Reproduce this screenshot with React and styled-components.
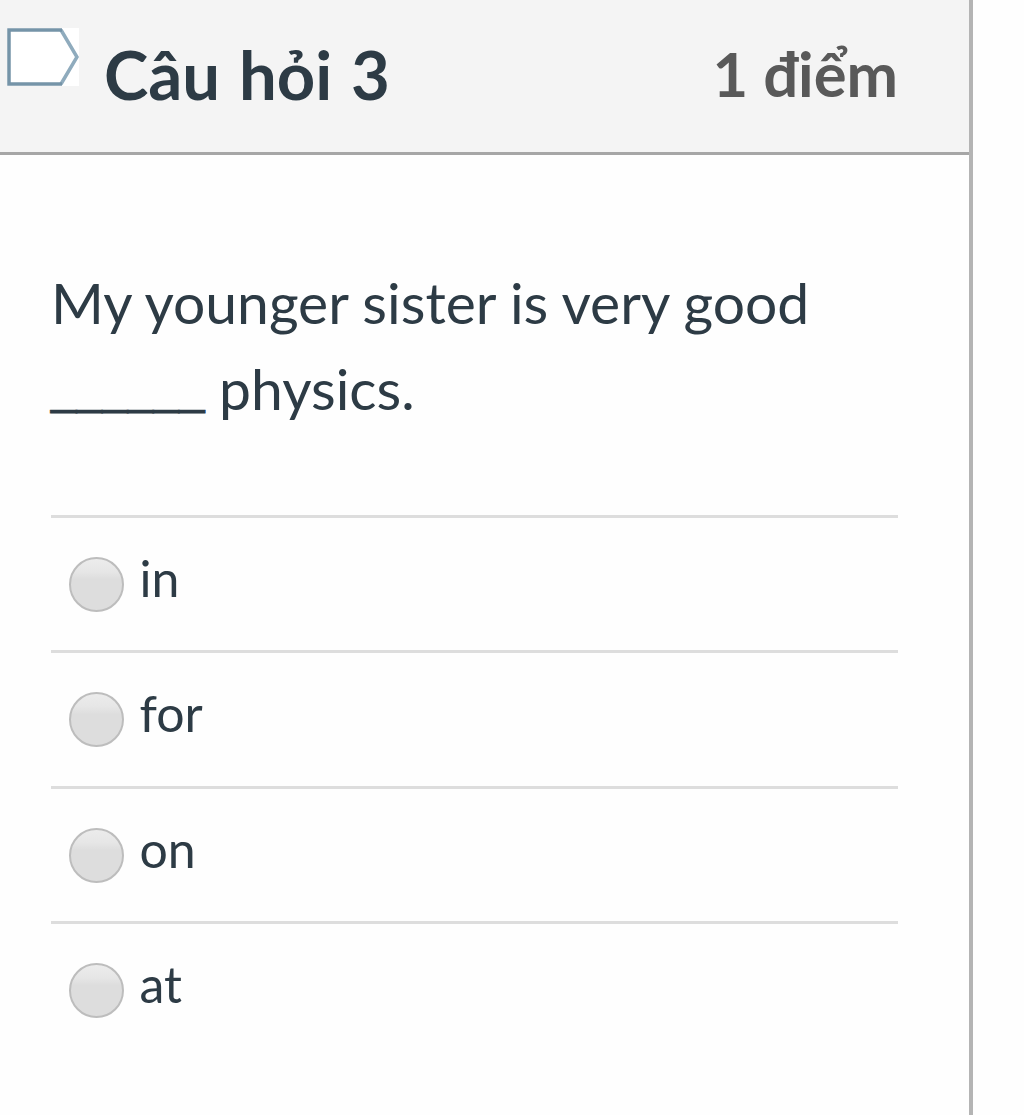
import React, { useState } from "react";
import styled, { createGlobalStyle } from "styled-components";

const GlobalStyle = createGlobalStyle`
    * {
        box-sizing: border-box;
    }
    body {
        margin: 0;
        background: #fefefe;
        font-family: Lato, "Open Sans", sans-serif;
        color: #2d3b45;
    }
`;

const Card = styled.section`
    width: 973px;
    height: 1115px;
    border-right: 4px solid #b4b4b4;
    overflow: hidden;
`;

const Header = styled.header`
    display: flex;
    align-items: flex-start;
    height: 155px;
    padding: 28px 71px 0 7px;
    background: #f4f4f4;
    border-bottom: 3px solid #a6a6a6;
`;

const Flag = styled.svg`
    flex: none;
    width: 72px;
    height: 58px;
`;

const Title = styled.h2`
    flex: 1;
    margin: 6px 0 0 25px;
    font-size: 67px;
    line-height: 80px;
    font-weight: 700;
    word-spacing: 2.5px;
`;

const Points = styled.span`
    margin-top: 5px;
    font-size: 61.5px;
    line-height: 80px;
    font-weight: 700;
    color: #595959;
`;

const Body = styled.div`
    padding: 105px 71px 0 51px;
`;

const Question = styled.p`
    margin: 0 0 84px;
    font-size: 57px;
    line-height: 85.5px;
`;

// Lato leaves gaps between underscores, so the blank uses a joined-up face
const Blank = styled.span`
    font-family: "Liberation Sans", Arial, sans-serif;
    font-size: 46px;
    line-height: 0;
    vertical-align: 6px;
    -webkit-text-stroke: 0.8px #2d3b45;
`;

const Answer = styled.label`
    display: flex;
    align-items: flex-start;
    height: 135.4px;
    padding: 39px 0 0 18px;
    border-top: 3px solid #dddddd;
    cursor: pointer;
`;

const Radio = styled.input`
    appearance: none;
    flex: none;
    width: 55px;
    height: 55px;
    margin: 0;
    border: 2px solid #bdbdbd;
    border-radius: 50%;
    background: linear-gradient(#ececec 0%, #e6e6e6 25%, #dddddd 40%, #dddddd 100%);
    &:checked {
        background: radial-gradient(#555 30%, #dedede 34%);
    }
`;

const AnswerText = styled.span`
    margin: -9px 0 0 15.5px;
    font-size: 50px;
    line-height: 60px;
`;

const answers = ["in", "for", "on", "at"];

const App = () => {
    const [selected, setSelected] = useState(null);

    return (
        <>
            <GlobalStyle />
            <Card>
                <Header>
                    <Flag viewBox="0 0 72 58">
                        <rect width="72" height="58" fill="#fff" />
                        <path d="M54 2L70 29L54 56" fill="none" stroke="#8fabbd" strokeWidth="3.5" />
                        <path d="M55 2H2V56H55" fill="none" stroke="#7594a8" strokeWidth="3.5" />
                    </Flag>
                    <Title>Câu hỏi 3</Title>
                    <Points>1 điểm</Points>
                </Header>
                <Body>
                    <Question>
                        My younger sister is very good
                        <br />
                        <Blank>______</Blank> physics.
                    </Question>
                    {answers.map((answer) => (
                        <Answer key={answer}>
                            <Radio
                                type="radio"
                                name="answer"
                                checked={selected === answer}
                                onChange={() => setSelected(answer)}
                            />
                            <AnswerText>{answer}</AnswerText>
                        </Answer>
                    ))}
                </Body>
            </Card>
        </>
    );
};

export default App;
